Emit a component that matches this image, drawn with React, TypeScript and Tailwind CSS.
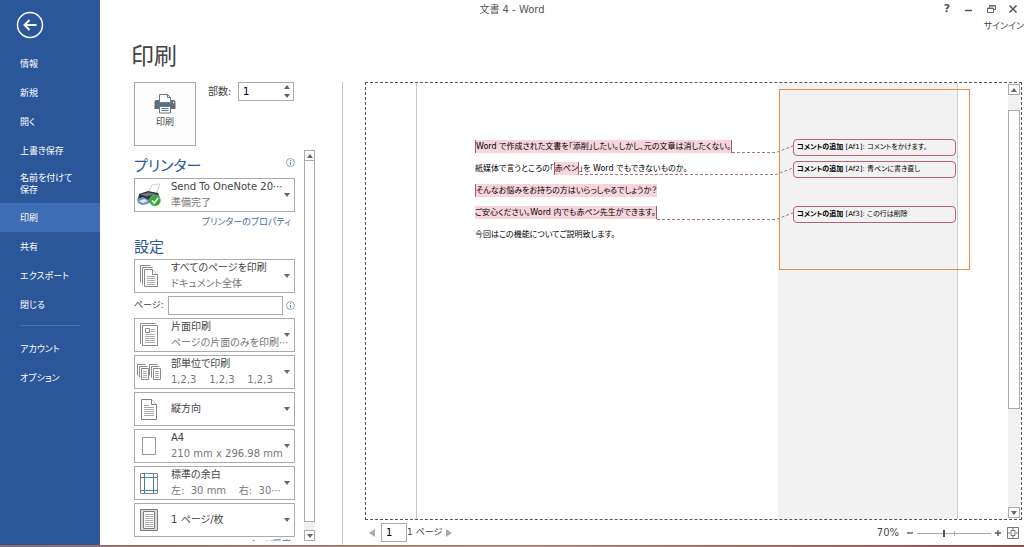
import type { ReactNode } from 'react';

const navItems = [
  { label: '情報' },
  { label: '新規' },
  { label: '開く' },
  { label: '上書き保存' },
  { label: '名前を付けて\n保存' },
  { label: '印刷', active: true },
  { label: '共有' },
  { label: 'エクスポート' },
  { label: '閉じる' },
];

const comments = [
  { id: 'Af1', text: 'コメントをかけます。' },
  { id: 'Af2', text: '青ペンに書き直し' },
  { id: 'Af3', text: 'この行は削除', gap: true },
];

function Caret({ up = false }: { up?: boolean }) {
  return (
    <svg viewBox="0 0 6 4" className="w-[6px] h-[4px] shrink-0" aria-hidden="true">
      <path d={up ? 'M0 4 3 0l3 4z' : 'M0 0h6L3 4z'} fill="#666" />
    </svg>
  );
}

function InfoIcon() {
  return (
    <svg viewBox="0 0 9 9" className="w-[9px] h-[9px] shrink-0" aria-hidden="true">
      <circle cx="4.5" cy="4.5" r="4" fill="none" stroke="#6d93b8" strokeWidth=".8" />
      <path d="M4.5 2v1M4.5 4v3" stroke="#4a7fb0" strokeWidth=".9" />
    </svg>
  );
}

/* ---------- Icons ---------- */

function PrinterIcon() {
  return (
    <svg viewBox="0 0 22 20" className="w-[22px] h-[20px]" aria-hidden="true">
      <path d="M.5 8q0-2 2-2H4v3h14V6h1.500q2 0 2 2v7h-21z" fill="#6b6b6b" />
      <path d="M4 6h1.500v3h11V6H18v5H4z" fill="#3f7ba8" />
      <path d="M5.500 8.500v-8h8l3 3v5z" fill="#fff" stroke="#777" />
      <path d="M13.500.5v3h3" fill="none" stroke="#777" />
      <circle cx="19.500" cy="8.500" r=".8" fill="#fff" />
      <path d="M5.500 12.500h11v6.500h-11z" fill="#fff" stroke="#777" />
      <path d="M7.500 14.500h7M7.500 16.500h7" stroke="#3f7ba8" />
    </svg>
  );
}

function DeviceIcon() {
  return (
    <svg viewBox="0 0 26 24" className="w-[26px] h-[24px]" aria-hidden="true">
      <path d="M12 10 16 2l8-1-4 11z" fill="#fff" stroke="#bbb" strokeWidth=".7" />
      <path d="M3 11 12 8l10 2 2 5-2 4-13 1-7-4z" fill="#30343a" />
      <path d="m4 11.500 8-2 8 1.500-9 2.500z" fill="#70767e" />
      <path d="m1 16 6-2 6 3-1 4-6 1-4-2z" fill="#7493b8" />
      <path d="m3 18 5-2 4 2-5 2z" fill="#e4edf6" />
      <circle cx="19" cy="17.500" r="5.500" fill="#35a63a" stroke="#7fcf70" strokeWidth=".7" />
      <path d="m16 17.500 2.200 2.500 4-5" fill="none" stroke="#fff" strokeWidth="1.600" />
    </svg>
  );
}

function PagesIcon() {
  return (
    <svg viewBox="0 0 20 22" className="w-[20px] h-[22px]" fill="#fff" stroke="#8a8a8a" aria-hidden="true">
      <path d="M1.500 17.500V.5h10" />
      <path d="M3.500 19.500v-17h10" />
      <path d="M5.500 4.500h8l5 5v12h-13z" />
      <path d="M13.500 4.500v5h5" />
      <path d="M8 11.500h8M8 13.500h8M8 15.500h8M8 17.500h8M8 19.500h8" strokeWidth=".7" />
    </svg>
  );
}

function OneSidedIcon() {
  return (
    <svg viewBox="0 0 20 24" className="w-[20px] h-[24px]" fill="#fff" stroke="#8a8a8a" aria-hidden="true">
      <path d="M1.500 21V.5h15" />
      <path d="M3.500 2.500h15v20h-15z" />
      <path d="M6.500 5.500h4v4h-4z" />
      <path d="M12 6.500h4M12 8.500h4M6 11.500h10M6 13.500h10M6 15.500h10M6 17.500h10M6 19.500h10" strokeWidth=".7" />
    </svg>
  );
}

function CollateIcon() {
  return (
    <svg viewBox="0 0 25 16" className="w-[25px] h-[16px]" fill="#fff" stroke="#8a8a8a" aria-hidden="true">
      {[0, 12].map((x) => (
        <g key={x} transform={`translate(${x} 0)`}>
          <path d="M.5 11.500V.5h8" />
          <path d="M2.500 13.500v-11h8" />
          <path d="M4.500 4.500h7v11h-7z" />
          <path d="M6 7.500h4M6 9.500h4M6 11.500h4M6 13.500h4" strokeWidth=".7" />
        </g>
      ))}
    </svg>
  );
}

function PortraitIcon() {
  return (
    <svg viewBox="0 0 16 21" className="w-[16px] h-[21px]" fill="#fff" stroke="#808080" aria-hidden="true">
      <path d="M.5.5h10l5 5v15H.5z" />
      <path d="M10.500.5v5h5" />
      <path d="M3 6.500h5M3 8.500h10M3 10.500h10M3 12.500h10M3 14.500h10M3 16.500h10" strokeWidth=".7" />
    </svg>
  );
}

function PaperIcon() {
  return (
    <svg viewBox="0 0 14 18" className="w-[14px] h-[18px]" aria-hidden="true">
      <path d="M.5.5h13v17H.5z" fill="#fff" stroke="#999" />
    </svg>
  );
}

function MarginsIcon() {
  return (
    <svg viewBox="0 0 18 21" className="w-[18px] h-[21px]" fill="none" aria-hidden="true">
      <path d="M.5.5h17v20H.5z" fill="#fff" stroke="#8a8a8a" />
      <path d="M4.500 0v21M13.500 0v21M0 4.500h18M0 17.500h18" stroke="#4b7f9f" />
    </svg>
  );
}

function SheetIcon() {
  return (
    <svg viewBox="0 0 18 22" className="w-[18px] h-[22px]" aria-hidden="true">
      <path d="M.5.5h17v21H.5z" fill="#d9d9d9" stroke="#808080" />
      <path d="M3.500 2.500h11v17h-11z" fill="#fff" stroke="#808080" />
      <path d="M5 5.500h8M5 7.500h8M5 9.500h8M5 11.500h8M5 13.500h8M5 15.500h8M5 17.500h8" stroke="#8a8a8a" strokeWidth=".7" />
    </svg>
  );
}

/* ---------- Building blocks ---------- */

function Setting({ name, icon, value, detail }: { name: string; icon: ReactNode; value: string; detail?: string }) {
  return (
    <label className="flex items-center h-[34px] shrink-0 border border-[#ababab] bg-white pr-1">
      <span className="w-7 shrink-0 flex justify-center">{icon}</span>
      <span className="flex-1 min-w-0 pl-2 flex flex-col">
        <select
          aria-label={name}
          className="appearance-none w-full h-4 bg-transparent text-[10px] leading-4 text-[#444] outline-none"
        >
          <option>{value}</option>
        </select>
        {detail && <span className="text-[10px] leading-4 text-[#777] whitespace-pre">{detail}</span>}
      </span>
      <Caret />
    </label>
  );
}

const edges = {
  both: 'border-x',
  left: 'border-l',
  right: 'border-r',
};

function Mark({ edge, children }: { edge: keyof typeof edges; children: ReactNode }) {
  return <mark className={`bg-[#f8d5dc] text-inherit py-0.5 border-[#a8566c] ${edges[edge]}`}>{children}</mark>;
}

function ScrollButton({ label, up = false }: { label: string; up?: boolean }) {
  return (
    <button aria-label={label} className="h-[11px] shrink-0 flex items-center justify-center border border-[#ababab] bg-white">
      <Caret up={up} />
    </button>
  );
}

function Sidebar() {
  return (
    <nav className="w-[100px] shrink-0 bg-[#2b579a] text-white text-[9px] leading-3">
      <button aria-label="戻る" className="block mt-[11px] ml-4">
        <svg viewBox="0 0 28 28" className="w-7 h-7" fill="none" stroke="#fff" aria-hidden="true">
          <circle cx="14" cy="14" r="12.500" strokeWidth="1.500" />
          <path d="M20.500 14H9M13.500 9 8.500 14l5 5" strokeWidth="2" />
        </svg>
      </button>
      <ul className="mt-[10px]">
        {navItems.map((item) => (
          <li key={item.label}>
            <a
              href="#"
              className={`flex items-center pl-5 whitespace-pre ${
                item.label.includes('\n') ? 'h-[38px]' : 'h-[29px]'
              } ${item.active ? 'bg-[#3e6db5]' : ''}`}
            >
              {item.label}
            </a>
          </li>
        ))}
      </ul>
      <hr className="mx-5 mt-1.5 mb-2 border-[#4a72b0]" />
      <a href="#" className="flex items-center pl-5 h-[29px]">アカウント</a>
      <a href="#" className="flex items-center pl-5 h-[29px]">オプション</a>
    </nav>
  );
}

function TitleBar() {
  return (
    <header>
      <div className="flex items-center h-[18px]">
        <h2 className="flex-1 text-center text-[10px] text-[#555]">文書 4 - Word</h2>
        <div className="w-[100px] flex justify-end text-[#555]">
          <button aria-label="ヘルプ" className="w-[22px] text-[11px] font-bold leading-4">?</button>
          <button aria-label="最小化" className="w-[22px] flex items-center justify-center">
            <svg viewBox="0 0 8 8" className="w-2 h-2" aria-hidden="true"><path d="M0 5.500h7" stroke="#555" strokeWidth="1.500" /></svg>
          </button>
          <button aria-label="元に戻す" className="w-[22px] flex items-center justify-center">
            <svg viewBox="0 0 9 8" className="w-[9px] h-2" fill="none" stroke="#666" aria-hidden="true">
              <path d="M2.500 2.500V.5h6v4h-2M.5 3h6v4.500h-6zM2 1h6M0 3.500h7" />
            </svg>
          </button>
          <button aria-label="閉じる" className="w-[22px] flex items-center justify-center">
            <svg viewBox="0 0 8 8" className="w-2 h-2" aria-hidden="true"><path d="m.5.5 7 7M7.500.5l-7 7" stroke="#555" strokeWidth="1.500" /></svg>
          </button>
        </div>
      </div>
      <div className="flex justify-end h-4">
        <a href="#" className="text-[9px] leading-4 text-[#444]">サインイン</a>
      </div>
    </header>
  );
}

function PrintSettings() {
  return (
    <section className="w-[209px] shrink-0 flex flex-col border-r border-[#c8c8c8]">
      <div className="flex items-start pr-12">
        <button className="w-[62px] shrink-0 h-16 pb-1 flex flex-col items-center justify-center border border-[#ababab] bg-[#fdfdfd] text-[9px] leading-4 text-[#444]">
          <PrinterIcon />
          印刷
        </button>
        <label htmlFor="copies" className="ml-3 w-[30px] shrink-0 text-[10px] leading-[19px] text-[#444] whitespace-nowrap">部数:</label>
        <div className="flex flex-1 min-w-0 h-[19px] border border-[#ababab]">
          <input id="copies" defaultValue="1" className="flex-1 min-w-0 pl-1 text-[10px] text-black outline-none" />
          <div className="w-3 flex flex-col items-center justify-around">
            <button aria-label="部数を増やす" className="flex"><Caret up /></button>
            <button aria-label="部数を減らす" className="flex"><Caret /></button>
          </div>
        </div>
      </div>

      <div className="flex flex-1 min-h-0 my-1">
        <div className="w-[161px] shrink-0 flex flex-col overflow-hidden">
          <div className="flex justify-between pt-1 shrink-0">
            <h2 className="text-[15px] leading-6 text-[#2b579a]">プリンター</h2>
            <span className="pt-1"><InfoIcon /></span>
          </div>
          <Setting name="プリンター" icon={<DeviceIcon />} value="Send To OneNote 20⋯" detail="準備完了" />
          <a href="#" className="self-end mt-1 pr-1 text-[9px] leading-3 text-[#41729f]">プリンターのプロパティ</a>
          <h2 className="mt-[9px] mb-0.5 text-[15px] leading-5 text-[#2b579a]">設定</h2>

          <div className="flex flex-col gap-[3px]">
            <Setting name="印刷範囲" icon={<PagesIcon />} value="すべてのページを印刷" detail="ドキュメント全体" />
            <div className="flex items-center h-[19px]">
              <label htmlFor="pages" className="w-[34px] text-[9px] text-[#444] whitespace-nowrap">ページ:</label>
              <input id="pages" className="w-[115px] h-[19px] mr-[3px] px-1 border border-[#ababab] text-[10px] outline-none" />
              <InfoIcon />
            </div>
            <Setting name="印刷面" icon={<OneSidedIcon />} value="片面印刷" detail="ページの片面のみを印刷⋯" />
            <Setting name="部単位" icon={<CollateIcon />} value="部単位で印刷" detail="1,2,3    1,2,3    1,2,3" />
            <Setting name="印刷の向き" icon={<PortraitIcon />} value="縦方向" />
            <Setting name="用紙サイズ" icon={<PaperIcon />} value="A4" detail="210 mm x 296.98 mm" />
            <Setting name="余白" icon={<MarginsIcon />} value="標準の余白" detail="左:  30 mm    右:  30⋯" />
            <Setting name="ページ数" icon={<SheetIcon />} value="1 ページ/枚" />
          </div>
          <a href="#" className="self-end shrink-0 mt-px pr-1 text-[9px] leading-3 text-[#41729f]">ページ設定</a>
        </div>

        <div className="ml-[9px] w-[11px] flex flex-col bg-[#f0f0f0]">
          <ScrollButton label="上へスクロール" up />
          <div className="flex-1 border-x border-b border-[#ababab] bg-white mb-2" />
          <ScrollButton label="下へスクロール" />
        </div>
      </div>
    </section>
  );
}

function Document() {
  return (
    <div className="relative flex flex-1 min-w-0 overflow-hidden">
      <article className="ml-[50px] w-[362px] shrink-0 border-l border-[#c8c8c8] pt-[53px] pl-[58px] text-[8px] leading-[22px] text-black whitespace-nowrap">
        <p><Mark edge="both">Word で作成された文書を｢添削｣したい。しかし、元の文章は消したくない。</Mark></p>
        <p>紙媒体で言うところの｢<Mark edge="both">赤ペン</Mark>｣を Word でもできないものか。</p>
        <p><Mark edge="left">そんなお悩みをお持ちの方はいらっしゃるでしょうか？</Mark></p>
        <p><Mark edge="right">ご安心ください。Word 内でも赤ペン先生ができます。</Mark></p>
        <p>今回はこの機能についてご説明致します。</p>
      </article>

      <aside className="w-[180px] shrink-0 border-r border-[#d0d0d0] bg-[#f2f2f2] pt-[56px] pl-[15px] pr-px flex flex-col gap-[5px]">
        {comments.map((c) => (
          <div
            key={c.id}
            className={`h-[17px] px-[3px] border border-[#b5647c] rounded-[4px] text-[7px] leading-[15px] text-black whitespace-nowrap ${
              c.gap ? 'mt-[23px]' : ''
            }`}
          >
            <b>コメントの追加</b> [{c.id}]: {c.text}
          </div>
        ))}
      </aside>

      {/* Connectors from the commented text to the balloons */}
      <svg className="absolute top-0 left-0 w-[430px] h-[200px]" fill="none" stroke="#a37684" strokeDasharray="3 2" aria-hidden="true">
        <path d="M366 69.500h44l18-7" />
        <path d="M214 91.500h196l18-7" />
        <path d="M291 136.500h119l18-7" />
      </svg>

      {/* Highlight frame round the comment area */}
      <div className="absolute top-[6px] left-[413px] w-[191px] h-[181px] border border-[rgb(228,145,80)]" />
    </div>
  );
}

function Preview() {
  return (
    <section className="flex-1 min-w-0 flex flex-col ml-[22px] mr-[2px]">
      <div className="flex flex-1 min-h-0 border border-dashed border-[#555]">
        <Document />
        <div className="w-3 my-px mr-px flex flex-col bg-[#f0f0f0]">
          <ScrollButton label="前のページ" up />
          <div className="mt-[15px] h-[299px] border border-[#ababab] bg-white" />
          <div className="flex-1" />
          <ScrollButton label="次のページ" />
        </div>
      </div>

      <footer className="flex items-center h-[25px] shrink-0 pl-1 text-[10px] text-[#444]">
        <button aria-label="前へ">
          <svg viewBox="0 0 6 8" className="w-[6px] h-2" aria-hidden="true"><path d="M6 0v8L0 4z" fill="#aaa" /></svg>
        </button>
        <input aria-label="ページ番号" defaultValue="1" className="ml-[6px] w-[26px] h-[19px] pl-1 border border-[#ababab] text-black outline-none" />
        <span className="text-[9px]">1 ページ</span>
        <button aria-label="次へ" className="ml-1">
          <svg viewBox="0 0 6 8" className="w-[6px] h-2" aria-hidden="true"><path d="M0 0v8l6-4z" fill="#aaa" /></svg>
        </button>

        <div className="ml-auto flex items-center">
          <span className="mr-2">70%</span>
          <button aria-label="縮小" className="flex">
            <svg viewBox="0 0 6 6" className="w-[6px] h-[6px]" aria-hidden="true"><path d="M0 3h6" stroke="#555" strokeWidth="1.300" /></svg>
          </button>
          <div className="relative mx-1 w-[74px] h-3">
            <svg viewBox="0 0 74 12" className="w-[74px] h-3" aria-hidden="true">
              <path d="M0 6.500h74M37.500 4v5" stroke="#aaa" />
              <path d="M27 3v7" stroke="#555" strokeWidth="2" />
            </svg>
            <input type="range" aria-label="ズーム" min="10" max="500" defaultValue="70" className="absolute inset-0 w-full h-full opacity-0" />
          </div>
          <button aria-label="拡大" className="flex">
            <svg viewBox="0 0 6 6" className="w-[6px] h-[6px]" aria-hidden="true"><path d="M0 3h6M3 0v6" stroke="#555" strokeWidth="1.300" /></svg>
          </button>
          <button aria-label="ページに合わせる" className="ml-[6px] mr-[3px]">
            <svg viewBox="0 0 12 12" className="w-3 h-3" fill="none" stroke="#777" aria-hidden="true">
              <path d="M.5.5h11v11H.5zM4 3.500h4v5H4z" />
              <path d="M6 1v2M6 9v2M1 6h2M9 6h2" />
            </svg>
          </button>
        </div>
      </footer>
    </section>
  );
}

export default function App() {
  return (
    <div className="h-screen flex flex-col bg-white font-['DejaVu_Sans','Noto_Sans_CJK_JP',sans-serif] [font-feature-settings:'palt']">
      <div className="flex flex-1 min-h-0">
        <Sidebar />
        <main className="flex-1 min-w-0 flex flex-col">
          <TitleBar />
          <h1 className="pl-[31px] h-12 text-[23px] leading-[44px] text-[#444]">印刷</h1>
          <div className="flex flex-1 min-h-0 pl-[34px]">
            <PrintSettings />
            <Preview />
          </div>
        </main>
      </div>
      <div className="h-[2px] shrink-0 bg-gradient-to-r from-[#8a6a6a] via-[#b08878] to-[#8a5050]" />
    </div>
  );
}
